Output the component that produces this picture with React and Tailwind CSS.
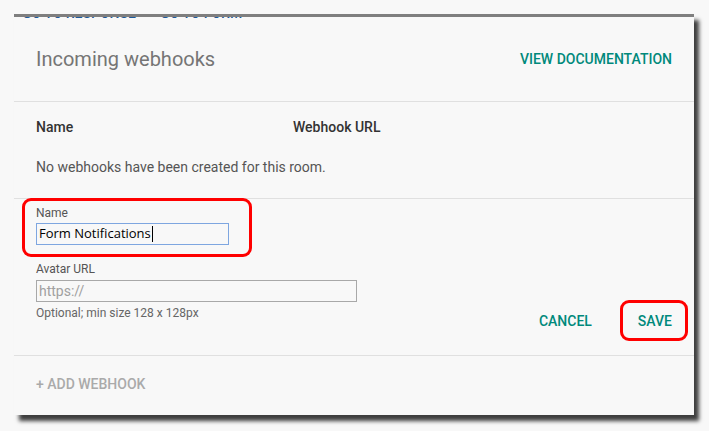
import React from "react";

const font = { fontFamily: "Roboto, 'Liberation Sans', sans-serif" };

const WebhooksDialog = () => {
  return (
    <div className="min-h-screen bg-[#f8f8f8] pt-[14px] pl-[14px]" style={font}>
      <div className="relative w-[680px] bg-[#f8f8f8] border-t-[3px] border-[#7f7f7f] shadow-[5px_6px_4px_rgba(0,0,0,0.75)]">
        {/* cut-off links behind the dialog edge */}
        <div className="absolute left-[8px] top-0 h-[2px] overflow-hidden">
          <div className="flex gap-[24px] -mt-[10px] text-[14px] font-medium leading-[12px] text-[#1d5a9c] whitespace-nowrap">
            <span>GO TO RESPONSE</span>
            <span>GO TO FORM</span>
          </div>
        </div>

        {/* Header */}
        <div className="h-[85px] flex items-center justify-between px-[22px] border-b border-[#e0e0e0]">
          <h1 className="text-[20px] text-[#757575]">Incoming webhooks</h1>
          <button className="text-[14px] font-medium text-[#00897b]">VIEW DOCUMENTATION</button>
        </div>

        {/* Table */}
        <div className="h-[97px] px-[22px] pt-[17px] border-b border-[#e0e0e0]">
          <div className="flex text-[14px] font-medium text-[#333] leading-[16px]">
            <div className="w-[257px]">Name</div>
            <div>Webhook URL</div>
          </div>
          <p className="mt-[22px] text-[14px] leading-[20px] text-[#555]">
            No webhooks have been created for this room.
          </p>
        </div>

        {/* Form */}
        <div className="h-[157px] flex justify-between px-[22px] border-b border-[#e0e0e0]">
          <div className="pt-[6px] w-[321px]">
            <label className="block text-[12px] leading-[16px] text-[#555]">Name</label>
            <div className="mt-[2px] w-[193px] h-[22px] border border-[#7ea6e0] flex items-center pl-[2px]">
              <span className="text-[13px] text-black" style={{ fontFamily: "'Open Sans', sans-serif" }}>
                Form Notifications
              </span>
              <span className="ml-[1px] w-[1px] h-[16px] bg-black" />
            </div>
            <label className="block mt-[16px] text-[12px] leading-[16px] text-[#555]">Avatar URL</label>
            <div className="mt-[3px] w-[321px] h-[22px] border border-[#a8a8a8] flex items-center pl-[2px]">
              <span className="text-[14px] text-[#a0a0a0]">https://</span>
            </div>
            <p className="mt-[3px] text-[12px] leading-[16px] text-[#666]">Optional; min size 128 x 128px</p>
          </div>
          <div className="self-end mb-[16px] flex items-center">
            <button className="h-[36px] text-[14px] font-medium text-[#00897b]">CANCEL</button>
            <button className="h-[36px] ml-[46px] text-[14px] font-medium text-[#00897b]">SAVE</button>
          </div>
        </div>

        {/* Footer */}
        <div className="h-[59px] px-[22px] pt-[16px]">
          <button className="text-[14px] font-medium text-[#aaaaaa] leading-[16px]">+ ADD WEBHOOK</button>
        </div>

        {/* red annotation boxes */}
        <div className="absolute left-[8px] top-[181px] w-[230px] h-[59px] border-[3px] border-[#ff0000] rounded-[9px]" />
        <div className="absolute left-[606px] top-[283px] w-[68px] h-[41px] border-[3px] border-[#ff0000] rounded-[9px]" />
      </div>
    </div>
  );
};

export default WebhooksDialog;
